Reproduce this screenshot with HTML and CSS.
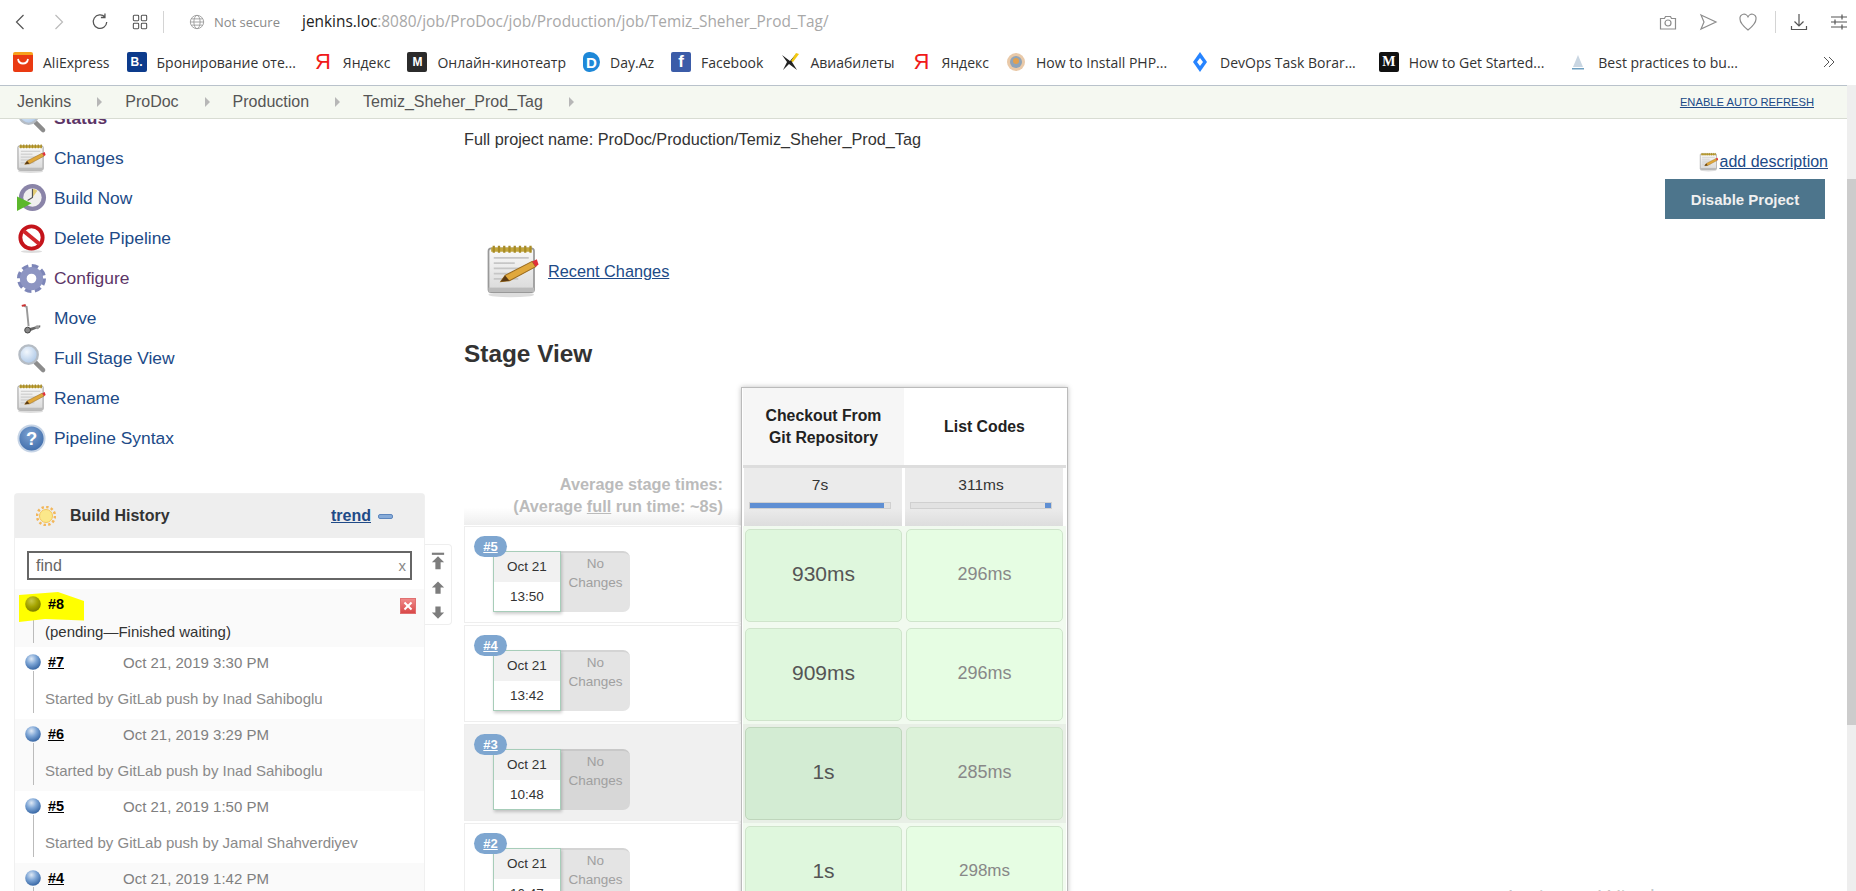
FILE: index.html
```html
<!DOCTYPE html>
<html lang="en">
<head>
    <meta charset="UTF-8">
    <meta name="viewport" content="width=device-width, initial-scale=1.0">
    <title>Temiz_Sheher_Prod_Tag [Jenkins]</title>
    <link rel="stylesheet" href="styles.css">
</head>
<body>
    <svg class="defs" width="0" height="0">
        <defs>
            <radialGradient id="ballBlue" cx="40%" cy="30%" r="75%">
                <stop offset="0" stop-color="#dfe9f5"/>
                <stop offset="0.45" stop-color="#7ea6d6"/>
                <stop offset="1" stop-color="#2f5f9e"/>
            </radialGradient>
            <radialGradient id="ballYellow" cx="40%" cy="30%" r="75%">
                <stop offset="0" stop-color="#c9c94a"/>
                <stop offset="0.5" stop-color="#a5a500"/>
                <stop offset="1" stop-color="#777700"/>
            </radialGradient>
            <linearGradient id="paper" x1="0" y1="0" x2="0" y2="1">
                <stop offset="0" stop-color="#fafafa"/>
                <stop offset="1" stop-color="#d9d9d9"/>
            </linearGradient>
            <radialGradient id="helpBlue" cx="45%" cy="35%" r="70%">
                <stop offset="0" stop-color="#7ea3d2"/>
                <stop offset="1" stop-color="#3a68a8"/>
            </radialGradient>
            <radialGradient id="lens" cx="40%" cy="35%" r="70%">
                <stop offset="0" stop-color="#f2f7fd"/>
                <stop offset="1" stop-color="#a9c5e6"/>
            </radialGradient>
            <symbol id="i-note" viewBox="0 0 32 32">
                <ellipse cx="15" cy="29.5" rx="13" ry="1.5" fill="#ddd"/>
                <rect x="2" y="3" width="26" height="25" rx="1.5" fill="url(#paper)" stroke="#999"/>
                <rect x="2" y="25.5" width="26" height="2.5" fill="#bbb"/>
                <path d="M3.5 2.5h23v2.5h-23z" fill="#c2a63d"/>
                <path d="M5 1.5v4M8 1.5v4M11 1.5v4M14 1.5v4M17 1.5v4M20 1.5v4M23 1.5v4M26 1.5v4" stroke="#a98c25" stroke-width="1.3"/>
                <path d="M5 8.5h20M5 11.5h12M5 14.5h20M5 17.5h14M5 20.5h14" stroke="#c6c6c6"/>
                <path d="M9 22l2.5-3.5L27 10.5l2 3-15 8z" fill="#e0a83c" stroke="#9a6b1e" stroke-width=".6"/>
                <path d="M9 22l2.5-3.5 2.5 3z" fill="#5a3a14"/>
                <path d="M27 10.5l2.6-1.2 1 3-1.6 1.2z" fill="#e0303a"/>
            </symbol>
            <symbol id="i-clock" viewBox="0 0 32 32">
                <circle cx="17" cy="15" r="14" fill="#8a84a8"/>
                <circle cx="17" cy="15" r="9.5" fill="#f0efef"/>
                <path d="M17 15V6a9 9 0 0 1 5 2z" fill="#e3cc74"/>
                <path d="M17 6v9l-5 3" fill="none" stroke="#555" stroke-width="1.2"/>
                <path d="M1 14l15 7-15 8z" fill="#5cb82c"/>
            </symbol>
            <symbol id="i-no" viewBox="0 0 32 32">
                <ellipse cx="16" cy="29.5" rx="11" ry="1.5" fill="#ddd"/>
                <circle cx="16" cy="15" r="11.5" fill="#fff" stroke="#c4141b" stroke-width="4"/>
                <path d="M7.5 8l17 14" stroke="#d3262c" stroke-width="4"/>
            </symbol>
            <symbol id="i-gear" viewBox="0 0 32 32">
                <circle cx="16" cy="16" r="12.5" fill="none" stroke="#7d86b8" stroke-width="5" stroke-dasharray="6.4 3.4"/>
                <circle cx="16" cy="16" r="8.5" fill="none" stroke="#8d95c2" stroke-width="7"/>
            </symbol>
            <symbol id="i-move" viewBox="0 0 32 32">
                <path d="M8 3l3 1 2 20" fill="none" stroke="#999" stroke-width="2"/>
                <path d="M6 3l4-1" stroke="#c33" stroke-width="2"/>
                <path d="M13 26l12-3v2l-10 4z" fill="#666"/>
                <circle cx="12" cy="28" r="3" fill="#888" stroke="#444"/>
                <circle cx="22" cy="25" r="2" fill="#999"/>
            </symbol>
            <symbol id="i-search" viewBox="0 0 32 32">
                <path d="M20 20l8 8" stroke="#8c8c8c" stroke-width="4.5" stroke-linecap="round"/>
                <circle cx="13" cy="12" r="9.5" fill="url(#lens)" stroke="#b5bcc4" stroke-width="2.4"/>
            </symbol>
            <symbol id="i-help" viewBox="0 0 32 32">
                <circle cx="16" cy="16" r="13.5" fill="url(#helpBlue)" stroke="#c6d4e6" stroke-width="2"/>
                <text x="16" y="22.5" text-anchor="middle" class="help-mark">?</text>
            </symbol>
            <symbol id="i-ball" viewBox="0 0 16 16">
                <circle cx="8" cy="8" r="7.8" fill="url(#ballBlue)"/>
            </symbol>
            <symbol id="i-arrow" viewBox="0 0 16 16">
                <path d="M8 1l7 7h-4v7H5V8H1z" fill="#7d7d7d"/>
            </symbol>
        </defs>
    </svg>

    <header class="toolbar">
        <svg class="tool-icon nav-back" viewBox="0 0 16 24"><path d="M12 4L4 12l8 8"/></svg>
        <svg class="tool-icon nav-forward" viewBox="0 0 16 24"><path d="M4 4l8 8-8 8"/></svg>
        <svg class="tool-icon nav-reload" viewBox="0 0 20 24"><path d="M15.500 6.500A7.500 7.500 0 1 0 17.500 12M15.500 2.500v4.500h-4.500"/></svg>
        <svg class="tool-icon nav-grid" viewBox="0 0 18 18"><rect x="1.500" y="1.500" width="6" height="6" rx="1"/><rect x="10.500" y="1.500" width="6" height="6" rx="1"/><rect x="1.500" y="10.500" width="6" height="6" rx="1"/><rect x="10.500" y="10.500" width="6" height="6" rx="1"/></svg>
        <span class="tool-sep"></span>
        <svg class="tool-icon nav-globe" viewBox="0 0 18 18"><circle cx="9" cy="9" r="7.500"/><ellipse cx="9" cy="9" rx="3.500" ry="7.500"/><path d="M1.500 9h15M2.500 5.500h13M2.500 12.500h13"/></svg>
        <span class="not-secure">Not secure</span>
        <span class="url"><b>jenkins.loc</b>:8080/job/ProDoc/job/Production/job/Temiz_Sheher_Prod_Tag/</span>
        <div class="tool-right">
            <svg class="tool-icon" viewBox="0 0 20 20"><path d="M2.500 6.500h4l1-2h5l1 2h4v10.500h-15z"/><circle cx="10" cy="11" r="3"/></svg>
            <svg class="tool-icon" viewBox="0 0 20 20"><path d="M3 3l15 7-15 7 3-7z"/></svg>
            <svg class="tool-icon" viewBox="0 0 20 20"><path d="M10 18C5 14 2 11 2 7a4 4 0 0 1 8-1.500A4 4 0 0 1 18 7c0 4-3 7-8 11z"/></svg>
            <span class="tool-sep"></span>
            <svg class="tool-icon dark" viewBox="0 0 20 20"><path d="M10 2v12M5.500 9.500l4.500 4.500 4.500-4.500M2.500 14v3.500h15V14"/></svg>
            <svg class="tool-icon dark" viewBox="0 0 20 20"><path d="M2 5h16M2 10h16M2 15h16M13 2.500v5M6 7.500v5M13 12.500v5"/></svg>
        </div>
    </header>

    <nav class="bookmarks">
        <a class="mark mark-ali"><span class="fav fav-ali"><svg viewBox="0 0 20 20"><path d="M5 7c1 6 9 6 10 0" fill="none" stroke="#fff" stroke-width="1.800"/></svg></span>AliExpress</a>
        <a class="mark mark-booking"><span class="fav fav-booking">B.</span>Бронирование оте...</a>
        <a class="mark mark-ya"><span class="fav fav-ya">Я</span>Яндекс</a>
        <a class="mark mark-kino"><span class="fav fav-m">M</span>Онлайн-кинотеатр</a>
        <a class="mark mark-day"><span class="fav fav-day">D</span>Day.Az</a>
        <a class="mark mark-fb"><span class="fav fav-fb">f</span>Facebook</a>
        <a class="mark mark-avia"><span class="fav"><svg viewBox="0 0 20 20"><path d="M2 3l8 6 6-7-4 8 5 8-8-6-6 6 4-8z" fill="#222"/><path d="M16 1l3 1-6 8-2-1z" fill="#f2c811"/></svg></span>Авиабилеты</a>
        <a class="mark mark-ya"><span class="fav fav-ya">Я</span>Яндекс</a>
        <a class="mark mark-php"><span class="fav"><svg viewBox="0 0 20 20"><circle cx="10" cy="10" r="9" fill="#e9c9a8"/><circle cx="10" cy="10" r="6" fill="#8fa4b8"/><circle cx="10" cy="9" r="3" fill="#e2a04e"/></svg></span>How to Install PHP...</a>
        <a class="mark mark-devops"><span class="fav"><svg viewBox="0 0 20 20"><path d="M10 0l7 10-7 10-7-10z" fill="#2684ff"/><path d="M10 6l3 4-3 4-3-4z" fill="#fff"/></svg></span>DevOps Task Borar...</a>
        <a class="mark mark-medium"><span class="fav fav-medium">M</span>How to Get Started...</a>
        <a class="mark mark-best"><span class="fav"><svg viewBox="0 0 20 20"><path d="M10 3l5 12H5z" fill="#c9d6e2"/><path d="M4 16h12v1.500H4z" fill="#6d9fc0"/></svg></span>Best practices to bu...</a>
        <svg class="more" viewBox="0 0 14 14"><path d="M2 2l5 5-5 5M7 2l5 5-5 5"/></svg>
    </nav>

    <div class="window">
        <div class="page">
            <div class="breadcrumbs">
                <a class="crumb">Jenkins</a><i class="crumb-arrow"></i>
                <a class="crumb">ProDoc</a><i class="crumb-arrow"></i>
                <a class="crumb">Production</a><i class="crumb-arrow"></i>
                <a class="crumb">Temiz_Sheher_Prod_Tag</a><i class="crumb-arrow"></i>
                <a class="auto-refresh">ENABLE AUTO REFRESH</a>
            </div>

            <div class="content">
                <aside class="side">
                    <ul class="tasks">
                        <li><svg class="task-icon"><use href="#i-search"/></svg><a class="visited status">Status</a></li>
                        <li><svg class="task-icon"><use href="#i-note"/></svg><a>Changes</a></li>
                        <li><svg class="task-icon"><use href="#i-clock"/></svg><a>Build Now</a></li>
                        <li><svg class="task-icon"><use href="#i-no"/></svg><a>Delete Pipeline</a></li>
                        <li><svg class="task-icon"><use href="#i-gear"/></svg><a class="visited">Configure</a></li>
                        <li><svg class="task-icon"><use href="#i-move"/></svg><a>Move</a></li>
                        <li><svg class="task-icon"><use href="#i-search"/></svg><a>Full Stage View</a></li>
                        <li><svg class="task-icon"><use href="#i-note"/></svg><a>Rename</a></li>
                        <li><svg class="task-icon"><use href="#i-help"/></svg><a>Pipeline Syntax</a></li>
                    </ul>

                    <div class="history-wrap">
                        <section class="history">
                            <div class="history-head">
                                <svg class="sun" viewBox="0 0 20 20">
                                    <circle cx="10" cy="10" r="9" fill="none" stroke="#f2b65a" stroke-width="2.500" stroke-dasharray="2.400 2.300"/>
                                    <circle cx="10" cy="10" r="6.500" fill="#fbe88a" stroke="#f4c55e"/>
                                </svg>
                                <h3>Build History</h3>
                                <a class="trend">trend</a>
                                <span class="trend-minus"></span>
                            </div>
                            <div class="find">
                                <span>find</span>
                                <span class="find-x">x</span>
                            </div>
                            <div class="build build-pending">
                                <span class="highlight"></span>
                                <div class="build-top">
                                    <svg class="ball" viewBox="0 0 16 16"><circle cx="8" cy="8" r="7.800" fill="url(#ballYellow)"/></svg>
                                    <span class="build-no plain">#8</span>
                                    <span class="cancel"></span>
                                </div>
                                <p class="build-note dark-note">(pending—Finished waiting)</p>
                            </div>
                            <div class="build">
                                <div class="build-top"><svg class="ball"><use href="#i-ball"/></svg><a class="build-no">#7</a><span class="build-date">Oct 21, 2019 3:30 PM</span></div>
                                <p class="build-note">Started by GitLab push by Inad Sahiboglu</p>
                            </div>
                            <div class="build">
                                <div class="build-top"><svg class="ball"><use href="#i-ball"/></svg><a class="build-no">#6</a><span class="build-date">Oct 21, 2019 3:29 PM</span></div>
                                <p class="build-note">Started by GitLab push by Inad Sahiboglu</p>
                            </div>
                            <div class="build">
                                <div class="build-top"><svg class="ball"><use href="#i-ball"/></svg><a class="build-no">#5</a><span class="build-date">Oct 21, 2019 1:50 PM</span></div>
                                <p class="build-note">Started by GitLab push by Jamal Shahverdiyev</p>
                            </div>
                            <div class="build">
                                <div class="build-top"><svg class="ball"><use href="#i-ball"/></svg><a class="build-no">#4</a><span class="build-date">Oct 21, 2019 1:42 PM</span></div>
                                <p class="build-note">Started by GitLab push by Inad Sahiboglu</p>
                            </div>
                        </section>
                        <div class="history-nav">
                            <svg class="nav-top" viewBox="0 0 16 19"><path d="M1 0h14v2.500H1z" fill="#7d7d7d"/><path d="M8 4l7 7h-4v8H5v-8H1z" fill="#7d7d7d"/></svg>
                            <svg class="nav-arrow"><use href="#i-arrow"/></svg>
                            <svg class="nav-arrow flip"><use href="#i-arrow"/></svg>
                        </div>
                    </div>
                </aside>

                <main class="main">
                    <div class="project-name">Full project name: ProDoc/Production/Temiz_Sheher_Prod_Tag</div>
                    <div class="description"><svg class="desc-icon"><use href="#i-note"/></svg><a>add description</a></div>
                    <div class="actions"><button class="disable-btn">Disable Project</button></div>

                    <div class="recent">
                        <svg class="recent-icon"><use href="#i-note"/></svg>
                        <a>Recent Changes</a>
                    </div>

                    <h2 class="stage-title">Stage View</h2>

                    <div class="stage">
                        <div class="stage-left">
                            <div class="avg-label">
                                <div>Average stage times:</div>
                                <div>(Average <u>full</u> run time: ~8s)</div>
                            </div>
                            <div class="run">
                                <a class="badge">#5</a>
                                <div class="run-card"><div class="run-date"><span>Oct 21</span><span>13:50</span></div><div class="run-changes">No Changes</div></div>
                            </div>
                            <div class="run">
                                <a class="badge">#4</a>
                                <div class="run-card"><div class="run-date"><span>Oct 21</span><span>13:42</span></div><div class="run-changes">No Changes</div></div>
                            </div>
                            <div class="run run-hover">
                                <a class="badge">#3</a>
                                <div class="run-card"><div class="run-date"><span>Oct 21</span><span>10:48</span></div><div class="run-changes">No Changes</div></div>
                            </div>
                            <div class="run">
                                <a class="badge">#2</a>
                                <div class="run-card"><div class="run-date"><span>Oct 21</span><span>10:47</span></div><div class="run-changes">No Changes</div></div>
                            </div>
                        </div>

                        <div class="stage-table">
                            <div class="stage-row stage-head">
                                <div class="head-cell shaded">Checkout From Git Repository</div>
                                <div class="head-cell">List Codes</div>
                            </div>
                            <div class="stage-row stage-avg">
                                <div class="avg-cell">7s<div class="bar"><div class="bar-fill"></div></div></div>
                                <div class="avg-cell">311ms<div class="bar"><div class="bar-fill bar-end"></div></div></div>
                            </div>
                            <div class="stage-row result">
                                <div class="cell first big">930ms</div>
                                <div class="cell second">296ms</div>
                            </div>
                            <div class="stage-row result">
                                <div class="cell first big">909ms</div>
                                <div class="cell second">296ms</div>
                            </div>
                            <div class="stage-row result result-hover">
                                <div class="cell first big">1s</div>
                                <div class="cell second">285ms</div>
                            </div>
                            <div class="stage-row result">
                                <div class="cell first big">1s</div>
                                <div class="cell second small">298ms</div>
                            </div>
                        </div>
                    </div>
                </main>
            </div>
        </div>
        <div class="scrollbar"><div class="thumb"></div></div>
    </div>

    <div class="watermark">Activate Windows</div>
</body>
</html>
```

FILE: styles.css
```css
* {
    box-sizing: border-box;
}
html, body {
    height: 891px;
    margin: 0;
    overflow: hidden;
}
body {
    display: flex;
    flex-direction: column;
    position: relative;
    font-family: "Liberation Sans", Arial, sans-serif;
    color: #333;
    background: #fff;
}
.defs {
    position: absolute;
}
.help-mark {
    font-family: "Liberation Sans", Arial, sans-serif;
    font-size: 19px;
    font-weight: bold;
    fill: #fff;
}
a {
    cursor: pointer;
}

/* browser chrome */
.toolbar {
    height: 43px;
    flex: none;
    display: flex;
    align-items: center;
    padding-left: 13px;
    font-family: "Open Sans", sans-serif;
}
.tool-icon {
    width: 20px;
    height: 20px;
    fill: none;
    stroke: #8d8d8d;
    stroke-width: 1.2;
    flex: none;
}
.tool-icon.dark {
    stroke: #555;
}
.nav-back {
    width: 14px;
    height: 22px;
    stroke: #555;
    stroke-width: 1.4;
}
.nav-forward {
    width: 14px;
    height: 22px;
    margin-left: 25px;
    stroke: #bbb;
    stroke-width: 1.4;
}
.nav-reload {
    width: 18px;
    height: 22px;
    margin-left: 25px;
    stroke: #555;
    stroke-width: 1.4;
}
.nav-grid {
    width: 16px;
    height: 16px;
    margin-left: 23px;
    stroke: #555;
}
.tool-sep {
    width: 1px;
    height: 22px;
    background: #d4d4d4;
    margin-left: 15px;
    flex: none;
}
.nav-globe {
    width: 16px;
    height: 16px;
    margin-left: 25px;
    stroke: #999;
    stroke-width: 1;
}
.not-secure {
    margin-left: 9px;
    font-size: 13px;
    color: #8a8a8a;
    width: 88px;
    white-space: nowrap;
}
.url {
    font-size: 15.4px;
    color: #a8a8a8;
    white-space: nowrap;
}
.url b {
    font-weight: normal;
    color: #222;
}
.tool-right {
    margin-left: auto;
    display: flex;
    align-items: center;
    gap: 20px;
    padding-right: 7px;
}
.tool-right .tool-sep {
    margin: 0 -7px 0 -3px;
}

.bookmarks {
    height: 42px;
    flex: none;
    display: flex;
    align-items: center;
    padding-left: 13px;
    padding-bottom: 4px;
    gap: 17px;
    font-family: "Open Sans", sans-serif;
    font-size: 14px;
    color: #333;
    white-space: nowrap;
    position: relative;
}
.mark {
    display: flex;
    align-items: center;
    gap: 10px;
}
.mark-devops {
    margin-left: 6px;
}
.mark-medium {
    margin-left: 6px;
}
.mark-best {
    margin-left: 7px;
}
.fav {
    width: 20px;
    height: 20px;
    flex: none;
    display: flex;
    align-items: center;
    justify-content: center;
    border-radius: 2px;
}
.fav svg {
    width: 20px;
    height: 20px;
}
.fav-ali {
    background: linear-gradient(#f7a01c 0 3px, #ea3a12 3px);
}
.fav-booking {
    background: #0c3b8c;
    color: #fff;
    font: bold 12px "Liberation Sans", sans-serif;
}
.fav-ya {
    color: #f01a1a;
    font: 22px "Liberation Sans", sans-serif;
}
.fav-m {
    background: #2b2b2b;
    color: #fff;
    font: bold 12px "Liberation Sans", sans-serif;
}
.fav-day {
    color: #fff;
    background: #1e88d8;
    font: bold 15px "Liberation Sans", sans-serif;
    border-radius: 6px 10px 10px 6px;
    width: 17px;
}
.fav-fb {
    background: #3b5ca8;
    color: #fff;
    font: bold 17px "Liberation Sans", sans-serif;
    align-items: flex-end;
}
.fav-medium {
    background: #111;
    color: #fff;
    font: bold 14px "Liberation Serif", serif;
}
.more {
    position: absolute;
    left: 1822px;
    top: 12px;
    width: 14px;
    height: 14px;
    fill: none;
    stroke: #555;
}

/* page */
.window {
    flex: 1;
    min-height: 0;
    display: flex;
}
.page {
    flex: 1;
    min-width: 0;
    display: flex;
    flex-direction: column;
}
.scrollbar {
    width: 9px;
    flex: none;
    background: #eee;
    padding-top: 94px;
}
.thumb {
    height: 546px;
    background: #ccc;
}
.breadcrumbs {
    height: 34px;
    flex: none;
    display: flex;
    align-items: center;
    padding-left: 17px;
    padding-right: 33px;
    background: #f5f8f1;
    border-top: 1px solid #b9c2cb;
    border-bottom: 1px solid #d8dcd3;
    font-size: 16px;
    color: #555;
    position: relative;
    z-index: 2;
}
.crumb-arrow {
    width: 0;
    height: 0;
    margin: 0 23px 0 26px;
    border-left: 5px solid #b7b7b7;
    border-top: 5px solid transparent;
    border-bottom: 5px solid transparent;
}
.auto-refresh {
    margin-left: auto;
    font-size: 11.2px;
    color: #204a87;
    text-decoration: underline;
}
.content {
    flex: 1;
    min-height: 0;
    overflow: hidden;
    display: flex;
    align-items: flex-start;
}

/* side panel */
.side {
    width: 464px;
    flex: none;
    padding-left: 14px;
    margin-top: -21px;
}
.tasks {
    list-style: none;
    margin: 0;
    padding: 0;
}
.tasks li {
    height: 40px;
    display: flex;
    align-items: center;
    gap: 7px;
    padding-left: 2px;
    font-size: 17.4px;
}
.tasks a {
    color: #204a87;
}
.tasks a.visited {
    color: #5c3566;
}
.tasks a.status {
    font-weight: bold;
}
.task-icon {
    width: 31px;
    height: 31px;
    flex: none;
}
.history-wrap {
    display: flex;
    align-items: flex-start;
    margin-top: 35px;
}
.history {
    width: 411px;
    flex: none;
    border: 1px solid #f0f0f0;
    border-bottom: 0;
    border-radius: 4px 4px 0 0;
}
.history-head {
    height: 44px;
    display: flex;
    align-items: center;
    background: #eee;
    padding-left: 21px;
    padding-right: 31px;
}
.sun {
    width: 20px;
    height: 20px;
}
.history-head h3 {
    margin: 0 0 0 14px;
    font-size: 16px;
    color: #333;
}
.trend {
    margin-left: auto;
    font-size: 16px;
    font-weight: bold;
    color: #204a87;
    text-decoration: underline;
}
.trend-minus {
    width: 15px;
    height: 5px;
    margin-left: 7px;
    background: #87abd8;
    border: 1px solid #5d86bd;
    border-radius: 2px;
}
.find {
    height: 29px;
    margin: 13px 12px 9px 12px;
    border: 2px solid #666;
    display: flex;
    align-items: center;
    justify-content: space-between;
    padding: 0 4px 0 7px;
    font-size: 16px;
    color: #666;
}
.find-x {
    font-size: 15px;
    color: #888;
}
.build {
    height: 72px;
    padding: 7px 0 0 10px;
    position: relative;
}
.build:nth-of-type(odd) {
    background: #fafafa;
}
.build-pending {
    height: 58px;
    background: #fafafa;
}
.build::before {
    content: "";
    position: absolute;
    left: 18px;
    top: 24px;
    bottom: 6px;
    border-left: 1px solid #bbb;
}
.build-pending::before {
    bottom: 4px;
}
.build-top {
    display: flex;
    align-items: center;
    height: 16px;
    position: relative;
    font-size: 15px;
}
.ball {
    width: 16px;
    height: 16px;
    flex: none;
}
.build-no {
    margin-left: 7px;
    width: 75px;
    font-size: 14.4px;
    font-weight: bold;
    color: #000;
    text-decoration: underline;
}
.build-no.plain {
    text-decoration: none;
}
.build-date {
    color: #808080;
}
.cancel {
    position: absolute;
    left: 375px;
    top: 2px;
    width: 16px;
    height: 16px;
    background: linear-gradient(#f08a8a, #d94848);
    border: 1px solid #e07070;
}
.cancel::before, .cancel::after {
    content: "";
    position: absolute;
    left: 2px;
    top: 6px;
    width: 10px;
    height: 2px;
    background: #fff;
    transform: rotate(45deg);
}
.cancel::after {
    transform: rotate(-45deg);
}
.build-note {
    margin: 20px 0 0 20px;
    font-size: 15px;
    line-height: 18px;
    color: #8a8a8a;
    white-space: nowrap;
}
.dark-note {
    margin-top: 11px;
    color: #333;
    font-size: 15px;
}
.highlight {
    position: absolute;
    left: 4px;
    top: 3px;
    width: 65px;
    height: 30px;
    background: #ffff00;
    clip-path: polygon(0 10%, 60% 0, 100% 30%, 100% 95%, 40% 90%, 0 100%);
}
.history-nav {
    width: 27px;
    height: 81px;
    margin-top: 51px;
    border: 1px solid #eee;
    border-left: 0;
    border-radius: 0 4px 4px 0;
    display: flex;
    flex-direction: column;
    align-items: center;
    gap: 10px;
    padding-top: 7px;
}
.nav-top {
    width: 14px;
    height: 18px;
    flex: none;
}
.nav-arrow {
    width: 14px;
    height: 15px;
    flex: none;
}
.nav-arrow.flip {
    transform: rotate(180deg);
}

/* main */
.main {
    flex: 1;
    min-width: 0;
    padding-right: 19px;
}
.project-name {
    margin-top: 9px;
    font-size: 16.25px;
    line-height: 22px;
}
.description {
    margin-top: 2px;
    display: flex;
    justify-content: flex-end;
    align-items: center;
    height: 20px;
    font-size: 16px;
}
.description a, .recent a {
    color: #204a87;
    text-decoration: underline;
}
.desc-icon {
    width: 20px;
    height: 20px;
}
.actions {
    display: flex;
    justify-content: flex-end;
    padding-right: 3px;
    margin-top: 7px;
}
.disable-btn {
    width: 160px;
    height: 40px;
    background: #4d758c;
    color: #f0f0f0;
    border: 0;
    font: bold 15px "Liberation Sans", sans-serif;
}
.recent {
    display: flex;
    align-items: center;
    gap: 7px;
    margin: 24px 0 0 21px;
    height: 56px;
    font-size: 16.3px;
}
.recent-icon {
    width: 56px;
    height: 56px;
}
.stage-title {
    margin: 41px 0 0 0;
    font-size: 24.4px;
    line-height: 28px;
    color: #333;
}

/* stage view */
.stage {
    display: flex;
    margin-top: 19px;
    align-items: flex-start;
}
.stage-left {
    width: 277px;
    flex: none;
    padding-top: 80px;
}
.avg-label {
    height: 58px;
    text-align: right;
    padding-right: 18px;
    font-size: 16.3px;
    font-weight: bold;
    line-height: 22px;
    color: #bbb;
    padding-top: 6px;
    background: linear-gradient(#fff 70%, #eee);
    margin-bottom: 1px;
}
.run {
    height: 97px;
    margin-bottom: 2px;
    position: relative;
    border: 1px solid #eee;
    border-right: 0;
}
.run-hover {
    background: #f0f0f0;
}
.badge {
    position: absolute;
    left: 9px;
    top: 9px;
    width: 33px;
    height: 21px;
    line-height: 21px;
    text-align: center;
    border-radius: 11px;
    background: #7ea6d0;
    color: #fff;
    font-size: 13px;
    font-weight: bold;
    text-decoration: underline;
    z-index: 1;
}
.run-card {
    position: absolute;
    left: 28px;
    top: 24px;
    width: 137px;
    height: 61px;
    display: flex;
    font-size: 13.5px;
}
.run-date {
    width: 68px;
    flex: none;
    display: flex;
    flex-direction: column;
    border: 1px solid #a7cdb9;
    background: #fff;
    color: #333;
    box-shadow: 1px 2px 3px rgba(0, 0, 0, 0.2);
    position: relative;
}
.run-date span {
    flex: 1;
    display: flex;
    align-items: center;
    justify-content: center;
}
.run-date span:first-child {
    background: #f1f1f1;
}
.run-changes {
    flex: 1;
    background: #e4e4e4;
    border-top: 2px solid #d4d4d4;
    border-radius: 0 7px 7px 0;
    color: #a0a0a0;
    text-align: center;
    line-height: 19px;
    padding: 1px 2px 0;
}
.run-hover .run-changes {
    background: #d7d7d7;
    border-top-color: #c8c8c8;
}
.stage-table {
    width: 327px;
    flex: none;
    border: 1px solid #bbb;
    border-bottom: 0;
    box-shadow: 0 0 5px rgba(0, 0, 0, 0.25);
    padding: 0 2px;
}
.stage-row {
    display: grid;
    grid-template-columns: 161px 161px;
    margin: 0 -1px;
}
.stage-head {
    height: 77px;
    border-bottom: 3px solid #ddd;
    box-sizing: content-box;
}
.head-cell {
    display: flex;
    align-items: center;
    justify-content: center;
    text-align: center;
    padding: 0 16px;
    font-size: 15.8px;
    font-weight: bold;
    line-height: 22px;
    color: #222;
}
.head-cell.shaded {
    background: #f6f6f6;
}
.stage-avg {
    height: 58px;
}
.avg-cell {
    background: linear-gradient(#ebebeb 70%, #ddd);
    margin-left: 1px;
    margin-right: 2px;
    text-align: center;
    font-size: 15.5px;
    line-height: 18px;
    padding: 8px 11px 0 5px;
    color: #333;
}
.bar {
    height: 7px;
    margin-top: 8px;
    background: #e2e2e2;
    border: 1px solid #d0d0d0;
    position: relative;
}
.bar-fill {
    position: absolute;
    left: 0;
    top: 0;
    bottom: 0;
    width: 96%;
    background: #5f8fd3;
}
.bar-fill.bar-end {
    left: auto;
    right: 0;
    width: 6px;
}
.result {
    height: 99px;
    padding: 3px 0 3px;
    background: #f1faef;
    column-gap: 0;
}
.result-hover {
    background: #e8efe6;
}
.cell {
    display: flex;
    align-items: center;
    justify-content: center;
    margin: 0 2px 0 2px;
    padding-bottom: 3px;
    border: 1px solid #cfe4cb;
    border-radius: 5px;
    color: #888;
    font-size: 18px;
}
.cell.first {
    background: #dff7dd;
}
.cell.second {
    background: #e6fde3;
}
.cell.big {
    font-size: 21px;
    color: #555;
}
.cell.small {
    font-size: 17px;
}
.result-hover .cell.first {
    background: #d3ecd3;
    border-color: #bfd6bc;
}
.result-hover .cell.second {
    background: #dcf2d9;
}
.watermark {
    position: absolute;
    left: 1503px;
    top: 882px;
    font-family: "Open Sans", sans-serif;
    font-size: 24px;
    line-height: 32px;
    color: rgba(0, 0, 0, 0.22);
    white-space: nowrap;
}
```
